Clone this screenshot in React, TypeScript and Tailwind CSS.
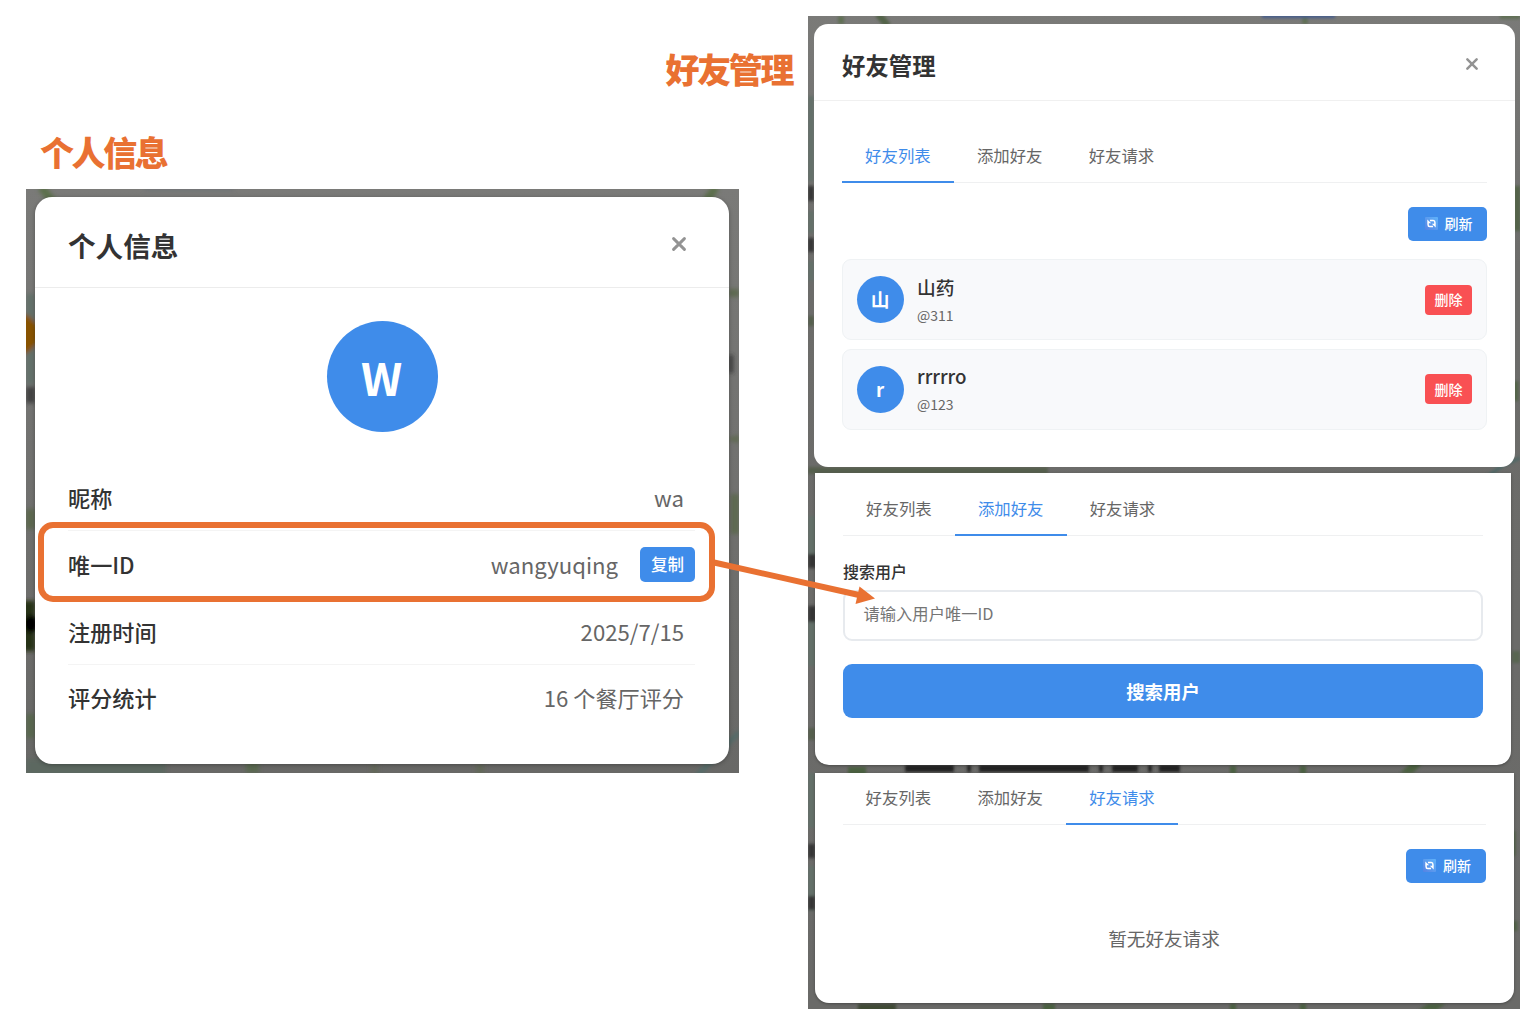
import type { ReactNode } from "react";

function CloseIcon({ className }: { className: string }) {
  return (
    <svg viewBox="0 0 14 14" className={className} fill="none" stroke="#939393" strokeWidth="2.9" strokeLinecap="round">
      <path d="M1.6 1.6 12.4 12.4M12.4 1.6 1.6 12.4" />
    </svg>
  );
}

function RefreshIcon() {
  return (
    <svg viewBox="0 0 13 13" className="size-[13px]">
      <defs>
        <linearGradient id="tile" x1="1" y1="0" x2="0" y2="1">
          <stop offset="0" stopColor="#60b4fb" />
          <stop offset="1" stopColor="#5682e2" />
        </linearGradient>
      </defs>
      <rect width="13" height="13" rx="1" fill="url(#tile)" />
      <g fill="none" stroke="#fff" strokeWidth="1.5">
        <path d="M5 3.4H8.300Q9.900 3.400 9.900 5.200V7" />
        <path d="M8 9.600H4.700Q3.100 9.600 3.100 7.800V6" />
      </g>
      <path d="M2.300 2.500V6.300H6.200zM10.700 10.500V6.700H6.800z" fill="#fff" />
    </svg>
  );
}

function RefreshButton() {
  return (
    <button className="flex h-[34px] w-[79.5px] items-center gap-[7px] rounded-[5px] bg-[#3f8cea] pl-[17px] text-[14px] font-medium leading-none text-white">
      <RefreshIcon />
      <span className="-mt-px">刷新</span>
    </button>
  );
}

const tabNames = ["好友列表", "添加好友", "好友请求"];

function Tabs({ active, className }: { active: number; className: string }) {
  return (
    <div className={"flex border-b border-[#eff0f1] text-[16.4px] leading-[24px] " + className}>
      {tabNames.map((name, i) => (
        <div
          key={name}
          className={
            "-mb-px h-[39.5px] w-[111.8px] border-b-[2.5px] text-center " +
            (i === active ? "border-[#3f8cea] text-[#3f8cea]" : "border-transparent text-[#666]")
          }
        >
          {name}
        </div>
      ))}
    </div>
  );
}

function Friend({ initial, name, id }: { initial: string; name: string; id: string }) {
  return (
    <div className="flex h-[81px] items-center rounded-[9px] border border-[#eff2f4] bg-[#f8f9fb] px-[14px]">
      <div className="flex size-[47px] items-center justify-center rounded-full bg-[#3f8cea] pr-px text-[18.7px] font-bold leading-none text-white">
        {initial}
      </div>
      <div className="-mt-[2px] ml-[13px] grow">
        <div className="text-[18.7px] font-medium leading-[28px] text-[#333]">{name}</div>
        <div className="mt-[4px] text-[14px] leading-[20px] text-[#666]">{id}</div>
      </div>
      <button className="h-[30px] w-[47px] rounded-[4px] bg-[#f95053] text-[14px] font-medium leading-[29px] text-white">删除</button>
    </div>
  );
}

function Row({ label, children, last }: { label: string; children: ReactNode; last?: boolean }) {
  return (
    <div
      className={
        "flex items-center justify-between border-b text-[22.15px] leading-[32px] " +
        (last ? "h-[65px] border-transparent" : "h-[67px] border-[#f4f4f4]")
      }
    >
      <span className="font-medium text-[#333]">{label}</span>
      {children}
    </div>
  );
}

function ProfileMap() {
  return (
    <svg viewBox="0 0 713 584" className="absolute inset-0 size-full">
      <defs>
        <filter id="softA" x="-50%" y="-50%" width="200%" height="200%">
          <feGaussianBlur stdDeviation="2" />
        </filter>
        <linearGradient id="baseA" x1="0" y1="0" x2="0" y2="1">
          <stop offset="0" stopColor="#7a7a78" />
          <stop offset="1" stopColor="#686866" />
        </linearGradient>
      </defs>
      <rect width="713" height="584" fill="url(#baseA)" />
      <g filter="url(#softA)">
        <path d="M15-2 28 14M680 12 690-2" stroke="#5c6f4c" strokeWidth="8" />
        <path d="M0 105h9v90H0z" fill="#63716a" />
        <circle cx="-10" cy="145" r="22" fill="#885200" />
        <path d="M0 198h9v16H0z" fill="#424242" />
        <path d="M0 320h9v20H0z" fill="#5c684e" />
        <path d="M-4 412h13v50H-4z" fill="#253315" />
        <ellipse cx="5" cy="435" rx="7" ry="9" fill="#000" />
        <path d="M0 525h9v24H0zM220 573h13v11h-13z" fill="#58684f" />
        <path d="M0 570h140v18H0z" fill="#5b6760" />
        <path d="M703 100h10v8h-10zM700 250l13-4v8zM705 305h8v40h-8z" fill="#5d694f" />
        <path d="M118-2h90v4h-90z" fill="#6f7376" />
        <path d="M703 166h4v18h-4z" fill="#393939" />
        <path d="m670 588 43-45" stroke="#4f6c69" strokeWidth="4" />
        <path d="M450 575h8v12h-8zM345 575h7v12h-7z" fill="#626858" />
      </g>
    </svg>
  );
}

function FriendsMap() {
  return (
    <svg viewBox="0 0 712 993" className="absolute inset-0 size-full">
      <defs>
        <filter id="softB" x="-20%" y="-20%" width="140%" height="140%">
          <feGaussianBlur stdDeviation="1.6" />
        </filter>
        <linearGradient id="baseB" x1="0" y1="0" x2="0" y2="1">
          <stop offset="0" stopColor="#7a7a78" />
          <stop offset=".25" stopColor="#6c6c6a" />
          <stop offset="1" stopColor="#6a6a68" />
        </linearGradient>
      </defs>
      <rect width="712" height="993" fill="url(#baseB)" />
      <g filter="url(#softB)">
        <path d="m70-2 10 12M709 170v45M707 365v20M704 815v25M706 905v10" stroke="#536449" strokeWidth="7" fill="none" />
        <path d="M704 635h8v12h-8z" fill="#586551" />
        <path d="M33 0v8M497 0v8M692 0h20" stroke="#617055" strokeWidth="6" />
        <path d="M454-3h73v5h-73z" fill="#465d8b" />
        <path d="M0 80h6v85H0zM0 195h6v22H0zM0 245h6v20H0zM0 500h8v45H0zM0 600h8v50H0zM0 757h7v55H0zM0 850h7v45H0z" fill="#647069" />
        <path d="M0 170h6v15H0zM0 222h6v14H0zM0 538h8v14H0zM0 590h8v16H0zM0 828h7v14H0zM0 880h7v14H0z" fill="#353535" />
        <path d="M0 451h240v7H0zM0 300h6v10H0zM0 712h7v12H0z" fill="#555f4d" />
        <path d="m680 460 14-10 18-8" stroke="#4b6766" strokeWidth="3" fill="none" />
        <path d="M40 751h18v8H40zM422 750h6v8h-6zM492 750h6v8h-6zM592 757l10-9h12l-9 9z" fill="#4b6040" />
        <path d="M422 988h6v8h-6zM492 988h6v8h-6zM620 988h18l-10 6h-18zM235 988h12v8h-12z" fill="#4b6040" />
        <path d="M50 988h38v8H50z" fill="#3f4b36" />
        <path
          d="M97 752.500H146M159 752.500H163M171 752.500H281M291 752.500H295M304 752.500H330M340 752.500H344M351 752.500H372"
          stroke="#202020"
          strokeWidth="7"
        />
      </g>
    </svg>
  );
}

function ProfilePanel() {
  return (
    <div className="relative ml-[26px] h-[584px] w-[713px] overflow-hidden pl-[9px] pt-[8px]">
      <ProfileMap />
      <div className="relative h-[567px] w-[694px] rounded-[17px] bg-white shadow-[0_1px_4px_rgba(0,0,0,0.3)]">
        <header className="flex h-[91px] items-center justify-between border-b border-[#ececec] pl-[33px] pr-[43px]">
          <h2 className="mt-[5px] text-[27.6px] font-semibold leading-[40px] text-[#333]">个人信息</h2>
          <CloseIcon className="mt-[4px] size-[14px]" />
        </header>
        <div className="px-[33px] pt-[33px]">
          <div className="mx-auto flex size-[111px] items-center justify-center rounded-full bg-[#3f8cea] pr-px text-[45px] font-bold leading-none text-white">
            W
          </div>
          <div className="mt-[32px] w-[627px]">
            <Row label="昵称">
              <span className="pr-[11px] text-[#666]">wa</span>
            </Row>
            <Row label="唯一ID">
              <span className="flex items-center">
                <span className="text-[#666]">wangyuqing</span>
                <button className="ml-[22px] h-[35px] w-[55px] rounded-[5px] bg-[#3f8cea] text-[16.5px] font-medium leading-[35px] text-white">复制</button>
              </span>
            </Row>
            <Row label="注册时间">
              <span className="pr-[11px] text-[#666]">2025/7/15</span>
            </Row>
            <Row label="评分统计" last>
              <span className="pr-[11px] text-[#666]">16 个餐厅评分</span>
            </Row>
          </div>
        </div>
      </div>
    </div>
  );
}

function FriendsPanel() {
  return (
    <div className="relative mt-[16px] h-[993px] w-[712px] overflow-hidden">
      <FriendsMap />
      <div className="relative flex flex-col">
        <section className="ml-[6px] mt-[8px] h-[443px] w-[701px] rounded-[14px] bg-white">
          <header className="flex h-[77px] items-center justify-between border-b border-[#f0f0f0] pl-[28px] pr-[37px]">
            <h2 className="mt-[5px] text-[23.4px] font-semibold leading-[34px] text-[#333]">好友管理</h2>
            <CloseIcon className="mt-[3px] size-[12px]" />
          </header>
          <div className="ml-[28px] w-[645px]">
            <Tabs active={0} className="pt-[42px]" />
            <div className="mt-[24px] flex justify-end">
              <RefreshButton />
            </div>
            <div className="mt-[18.5px] flex flex-col gap-[8.5px]">
              <Friend initial="山" name="山药" id="@311" />
              <Friend initial="r" name="rrrrro" id="@123" />
            </div>
          </div>
        </section>

        <section className="ml-[7px] mt-[6px] h-[292px] w-[696px] rounded-b-[14px] bg-white pl-[28px] pr-[28px] shadow-[0_1px_3px_rgba(0,0,0,0.3)]">
          <Tabs active={1} className="pt-[23px]" />
          <label className="mt-[23px] block text-[16px] font-medium leading-[24px] text-[#333]">搜索用户</label>
          <div className="mt-[7px] h-[51px] rounded-[9px] border-2 border-[#e7eaee] pl-[18.500px] text-[16.3px] leading-[43px] text-[#757575]">
            请输入用户唯一ID
          </div>
          <button className="mt-[23.5px] block h-[54px] w-full rounded-[9px] bg-[#3f8cea] text-[18.4px] font-semibold leading-[54px] text-white">
            搜索用户
          </button>
        </section>

        <section className="ml-[6.5px] mt-[8px] h-[230px] w-[699px] rounded-b-[14px] bg-white pl-[28px] pr-[28px] shadow-[0_1px_3px_rgba(0,0,0,0.3)]">
          <Tabs active={2} className="pt-[12px]" />
          <div className="mt-[24px] flex justify-end">
            <RefreshButton />
          </div>
          <p className="mt-[41px] text-center text-[18.6px] leading-[28px] text-[#666]">暂无好友请求</p>
        </section>
      </div>
    </div>
  );
}

export default function App() {
  return (
    <div className="relative flex h-[1022px] w-[1536px] overflow-hidden bg-white font-['Noto_Sans_CJK_SC',sans-serif]">
      <div className="w-[808px] shrink-0">
        <h1 className="mt-[45px] pr-[16px] text-right text-[34px] font-extrabold leading-[48px] tracking-[-2.4px] text-[#e97132]">好友管理</h1>
        <h1 className="mb-[13px] mt-[35px] pl-[40px] text-[34px] font-extrabold leading-[48px] tracking-[-2.4px] text-[#e97132]">个人信息</h1>
        <ProfilePanel />
      </div>
      <FriendsPanel />
      <div className="absolute left-[38px] top-[522px] h-[80px] w-[677px] rounded-[15px] border-[6px] border-[#e97132]" />
      <svg viewBox="0 0 170 60" className="absolute left-[710px] top-[550px] h-[60px] w-[170px]">
        <path d="M4 12.5 149 45" stroke="#e97132" strokeWidth="6" />
        <path d="m149.500 36.500 15.500 12-19.500 5.500z" fill="#e97132" />
      </svg>
    </div>
  );
}
